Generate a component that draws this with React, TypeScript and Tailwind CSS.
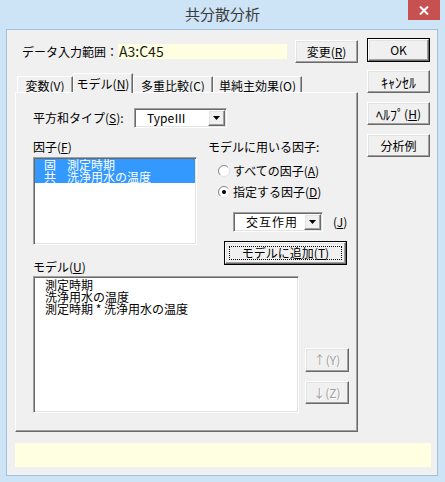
import type { ReactNode } from 'react';

// classic 3D edges
const raised =
  'border border-t-white border-l-white border-r-[#696969] border-b-[#696969] shadow-[inset_-1px_-1px_0_#a0a0a0,inset_1px_1px_0_#e3e3e3] bg-[#f0f0f0]';
const sunken =
  'border border-t-[#a0a0a0] border-l-[#a0a0a0] border-r-white border-b-white shadow-[inset_1px_1px_0_#696969,inset_-1px_-1px_0_#e3e3e3]';

function Btn({ children, className = '', disabled = false }: { children: ReactNode; className?: string; disabled?: boolean }) {
  return (
    <div
      className={`${raised} ${className} flex items-center justify-center text-[12px] leading-[14px] ${
        disabled ? 'text-[#a0a0a0] [text-shadow:1px_1px_0_#fff]' : 'text-black'
      }`}
    >
      {children}
    </div>
  );
}

function DefaultBtn({ children, className = '', focused = false }: { children: ReactNode; className?: string; focused?: boolean }) {
  return (
    <div className={`border border-black ${className}`}>
      <div className={`${raised} h-full flex items-center justify-center text-[12px] leading-[14px] p-[3px]`}>
        {focused ? (
          <div className="h-full w-full border border-dotted border-black flex items-center justify-center">{children}</div>
        ) : (
          children
        )}
      </div>
    </div>
  );
}

function Arrow() {
  return (
    <svg width="7" height="4" viewBox="0 0 7 4">
      <polygon points="0,0 7,0 3.5,4" fill="#000" />
    </svg>
  );
}

function Combo({ children, className = '' }: { children: ReactNode; className?: string }) {
  return (
    <div className={`${sunken} bg-white h-[20px] p-[1px] flex ${className}`}>
      <div className="flex-1 flex items-center text-[12px] leading-[14px]">{children}</div>
      <div className={`${raised} w-[17px] h-full flex items-center justify-center`}>
        <Arrow />
      </div>
    </div>
  );
}

function Radio({ checked, children }: { checked: boolean; children: ReactNode }) {
  return (
    <div className="flex items-center h-[14px] ml-[10px] gap-[3px] text-[12px] leading-[14px]">
      <svg width="12" height="12" viewBox="0 0 12 12">
        <circle cx="6" cy="6" r="5.5" fill="#fff" stroke="#e3e3e3" />
        <path d="M2.1 9.9 A5.5 5.5 0 0 1 9.9 2.1" fill="none" stroke="#8a8a8a" />
        {checked && <circle cx="6" cy="6" r="2" fill="#000" />}
      </svg>
      <span>{children}</span>
    </div>
  );
}

function Tab({ children, active = false, className = '' }: { children: ReactNode; active?: boolean; className?: string }) {
  return (
    <div
      className={`border-l border-t border-r border-l-white border-t-white border-r-[#696969] shadow-[inset_-1px_0_0_#a0a0a0] bg-[#f0f0f0] flex items-center justify-center text-[12px] leading-[14px] ${
        active ? 'h-[20px] -mb-px relative z-10 pt-[1px]' : 'h-[16px] pt-[2px]'
      } ${className}`}
    >
      {children}
    </div>
  );
}

export default function App() {
  return (
    <div className="w-[445px] h-[482px] bg-[#cde3f6] relative flex flex-col overflow-hidden font-['Noto_Sans_CJK_JP','Noto_Sans',sans-serif] text-black">
      {/* Title bar */}
      <div className="h-[29px] flex items-center justify-center text-[15px] text-[#3c3c3c]">共分散分析</div>
      <div className="absolute left-[408px] top-0 w-[32px] h-[20px] bg-[#c75050] flex items-center justify-center">
        <svg width="10" height="9" viewBox="0 0 10 9">
          <path d="M1 0.5 L9 8.5 M9 0.5 L1 8.5" stroke="#fff" strokeWidth="2" />
        </svg>
      </div>

      {/* Client area */}
      <div className="ml-[6px] w-[432px] h-[447px] border border-[#a3c0dc] bg-[#f0f0f0] flex flex-col">
        <div className="flex pt-[8px]">
          <div className="ml-[8px] w-[343px] flex flex-col">
            {/* data range */}
            <div className="mt-[2px] h-[23px] flex items-center">
              <span className="ml-[7px] w-[96px] text-[12px] leading-[14px]">データ入力範囲：</span>
              <div className="w-[169px] h-[15px] bg-[#ffffe1] flex items-center pl-[1px] text-[14px] leading-[15px] text-[#1a1a1a]">
                A3:C45
              </div>
              <Btn className="ml-[8px] w-[63px] h-[23px]">
                変更(<u>R</u>)
              </Btn>
            </div>

            {/* tabs */}
            <div className="mt-[10px] h-[19px] flex items-end pl-[2px]">
              <Tab className="w-[56px]">
                変数(<u>V</u>)
              </Tab>
              <Tab active className="w-[60px]">
                モデル(<u>N</u>)
              </Tab>
              <Tab className="w-[80px]">
                多重比較(<u>C</u>)
              </Tab>
              <Tab className="w-[89px]">
                単純主効果(<u>O</u>)
              </Tab>
            </div>

            {/* tab panel */}
            <div className="h-[340px] border border-l-white border-t-white border-r-[#696969] border-b-[#696969] shadow-[inset_-1px_-1px_0_#a0a0a0] pl-[17px] pt-[15px] flex flex-col">
              <div className="flex items-center h-[20px]">
                <span className="w-[101px] text-[12px] leading-[14px]">
                  平方和タイプ(<u>S</u>):
                </span>
                <Combo className="w-[93px]">
                  <span className="pl-[11px]">TypeⅢ</span>
                </Combo>
              </div>

              <div className="mt-[12px] flex items-start">
                <div className="w-[164px] flex flex-col">
                  <span className="h-[14px] text-[12px] leading-[14px]">
                    因子(<u>F</u>)
                  </span>
                  <div className={`${sunken} mt-[3px] h-[88px] bg-white p-[1px]`}>
                    <div className="bg-[#3399ff] text-white text-[12px] leading-[12px]">
                      <div className="flex h-[12px] pl-[9px]">
                        <span className="w-[23px]">固</span>
                        <span>測定時期</span>
                      </div>
                      <div className="flex h-[12px] pl-[9px]">
                        <span className="w-[23px]">共</span>
                        <span>洗浄用水の温度</span>
                      </div>
                    </div>
                  </div>
                  <span className="mt-[15px] h-[14px] text-[12px] leading-[14px]">
                    モデル(<u>U</u>)
                  </span>
                </div>

                <div className="ml-[11px] flex flex-col">
                  <span className="h-[14px] text-[12px] leading-[14px]">モデルに用いる因子:</span>
                  <div className="mt-[10px]">
                    <Radio checked={false}>
                      すべての因子(<u>A</u>)
                    </Radio>
                  </div>
                  <div className="mt-[7px]">
                    <Radio checked>
                      指定する因子(<u>D</u>)
                    </Radio>
                  </div>
                  <div className="mt-[13px] ml-[25px] flex items-center">
                    <Combo className="w-[90px]">
                      <span className="pl-[11px] tracking-[1px]">交互作用</span>
                    </Combo>
                    <span className="ml-[10px] text-[12px] leading-[14px]">
                      (<u>J</u>)
                    </span>
                  </div>
                  <DefaultBtn focused className="mt-[9px] ml-[16px] w-[123px] h-[24px]">
                    モデルに追加(<u>T</u>)
                  </DefaultBtn>
                </div>
              </div>

              <div className="mt-[2px] flex items-start">
                <div className={`${sunken} w-[266px] h-[137px] bg-white pl-[11px] pt-[2px] text-[12px] leading-[12px]`}>
                  <div className="h-[12px]">測定時期</div>
                  <div className="h-[12px]">洗浄用水の温度</div>
                  <div className="h-[12px]">測定時期 * 洗浄用水の温度</div>
                </div>
                <div className="ml-[6px] flex flex-col">
                  <Btn disabled className="mt-[72px] w-[44px] h-[24px]">
                    ↑(Y)
                  </Btn>
                  <Btn disabled className="mt-[9px] w-[44px] h-[23px]">
                    ↓(Z)
                  </Btn>
                </div>
              </div>
            </div>
          </div>

          {/* right buttons */}
          <div className="ml-[9px] flex flex-col">
            <DefaultBtn className="w-[63px] h-[24px]">OK</DefaultBtn>
            <Btn className="mt-[8px] w-[63px] h-[23px] text-[14px]">ｷｬﾝｾﾙ</Btn>
            <Btn className="mt-[9px] w-[63px] h-[23px]">
              <span className="text-[14px]">ﾍﾙﾌﾟ</span>(<u>H</u>)
            </Btn>
            <Btn className="mt-[9px] w-[63px] h-[23px]">分析例</Btn>
          </div>
        </div>

        {/* status bar */}
        <div className="mt-[11px] ml-[8px] w-[416px] h-[24px] bg-[#ffffe1]" />
      </div>
    </div>
  );
}
